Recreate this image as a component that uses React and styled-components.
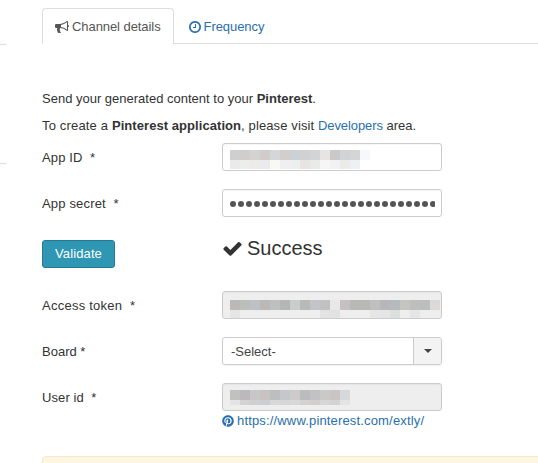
import React from "react";
import styled, { createGlobalStyle } from "styled-components";
import { FaPinterest } from "react-icons/fa";

const GlobalStyle = createGlobalStyle`
  * { box-sizing: border-box; }
  body {
    margin: 0;
    background: #fff;
    color: #333;
    font: 13px/18px "Liberation Sans", Arial, sans-serif;
    overflow: hidden;
  }
`;
const Page = styled.div`
  display: flex;
  height: 463px;
  overflow: hidden;
`;
const Sidebar = styled.div`
  width: 6px;
  height: 164px;
  margin-right: 36px;
  padding-top: 44px;
  border-bottom: 1px solid #ddd;
  &::before { content: ""; display: block; border-top: 1px solid #ddd; }
`;
const Main = styled.main`
  flex: 1;
`;
const Tabs = styled.nav`
  display: flex;
  height: 44px;
  padding-top: 8px;
  border-bottom: 1px solid #ddd;
`;
const Tab = styled.a`
  display: flex;
  align-items: center;
  height: 36px;
  padding: 1px 12px 0;
  border: 1px solid ${(p) => (p.$active ? "#ddd" : "transparent")};
  border-bottom: 0;
  border-radius: 4px 4px 0 0;
  margin-right: 2px;
  background: ${(p) => (p.$active ? "#fff" : "transparent")};
  color: ${(p) => (p.$active ? "#555" : "#2a6fad")};
  letter-spacing: -0.07px;
`;
const Icon = styled.svg`
  flex: none;
  width: ${(p) => p.$w}px;
  height: ${(p) => p.$w}px;
  margin-right: ${(p) => p.$gap || 3}px;
  fill: currentColor;
`;
const Content = styled.section`
  padding-top: 46px;
`;
const Paragraph = styled.p`
  margin: 0 0 9px;
  & + & { margin-bottom: 8px; }
`;
const Run = styled.span`
  letter-spacing: ${(p) => p.$spacing}px;
`;
const Link = styled.a`
  color: #2a6fad;
`;
const Row = styled.div`
  display: flex;
  height: 28px;
  margin-bottom: 18px;
`;
const Label = styled.label`
  width: 180px;
  padding-top: 6px;
  white-space: pre;
  letter-spacing: ${(p) => p.$spacing || 0}px;
`;
const Field = styled.div`
  width: 220px;
  height: 28px;
  padding: 6px 0 0 7px;
  border: 1px solid #ccc;
  border-radius: 3px;
  background: ${(p) => (p.$disabled ? "#eee" : "#fff")};
  box-shadow: inset 0 1px 1px rgba(0, 0, 0, 0.04);
  overflow: hidden;
`;
const TokenField = styled(Field)`
  padding-top: 8px;
`;
const Mosaic = styled.div`
  display: grid;
  grid-template-columns: repeat(${(p) => p.$cols}, 10px);
  grid-template-rows: ${(p) => p.$rows};
`;
const Tile = styled.i`
  background: ${(p) => p.$color};
`;
const Secret = styled.svg`
  display: block;
  width: 205px;
  height: 16px;
  fill: #555;
`;
const Button = styled.button`
  width: 73px;
  height: 28px;
  margin-right: 107px;
  padding: 0;
  border: 1px solid #247a90;
  border-radius: 3px;
  background: #2f96b4;
  color: #fff;
  font: inherit;
  letter-spacing: 0.12px;
`;
const StatusRow = styled(Row)`
  margin: 23px 0;
`;
const Status = styled.h3`
  display: flex;
  align-items: center;
  height: 16px;
  margin: 0;
  font-size: 20px;
  font-weight: 400;
`;
const Select = styled.div`
  display: flex;
  width: 220px;
  height: 28px;
  border: 1px solid #ccc;
  border-radius: 3px;
  box-shadow: 0 1px 2px rgba(0, 0, 0, 0.06);
  overflow: hidden;
`;
const SelectValue = styled.span`
  flex: 1;
  padding: 5px 8px;
  color: #444;
`;
const SelectArrow = styled.span`
  display: flex;
  align-items: center;
  justify-content: center;
  width: 28px;
  border-left: 1px solid #ccc;
  background: #f3f3f3;
`;
const Caret = styled.i`
  border: 4px solid transparent;
  border-top-color: #444;
  border-bottom: 0;
`;
const ProfileLink = styled(Link)`
  display: flex;
  align-items: center;
  height: 20px;
  margin: -18px 0 25px 180px;
  letter-spacing: 0.16px;
`;
const PinIcon = styled(FaPinterest)`
  width: 12px;
  height: 12px;
  margin-right: 3px;
`;
const Notice = styled.div`
  height: 40px;
  margin-right: -5px;
  border: 1px solid #fbe8c8;
  border-radius: 4px;
  background: #fdf7e2;
`;

const appId = "#cfcfcf #cecece #d5d3d2 #d0cccb #d4d6d8 #d2cecb #ccd1d5 #d1d1d1 #d3d4d6 #e7e5e3 #c9c9c9 #d2d3d4 #d5d5d6 #f7f8fb #eaeaea #eceeed #ecebea #ebebeb #f8f8f5 #efeff1 #ecefee #e7e5e4 #e9ebea #f6f6f6 #f2f2f2 #ebebe9 #eff0f2 #ffffff".split(" ");
const token = "#bbb9b7 #bcbebc #bec1c3 #bbb9b7 #bfbfbf #b4b7b6 #cacdcc #b9b9b7 #c3c4c8 #c1c1c1 #e8e8e6 #c5c0c1 #b8b8b7 #b8b8b7 #bfbfbf #b7b7bb #b5babc #c4c4c1 #bebebe #bbbebc #dbdad8 #e5e5e5 #eeeeee #eeeeee #eeeeee #eeeeee #eeeeee #eeeeee #eeeeee #eeeeee #e3e3e3 #e1e3e2 #eeeeee #eeeeee #eeeeee #e6e6e6 #e5e5e3 #dcdfdd #eeeeee #e5e5e3 #eeeeee #eeeeee".split(" ");
const user = "#c1c1bf #bababe #c9c7c6 #c7c3c2 #bdbebf #c5c7cc #cccbc9 #bcbcbc #c2c2c4 #c9c9c9 #c9c5c5 #d6d8dc #e4e4e4 #d3d3d3 #d0d0d0 #cccfd2 #d8d8d8 #d6d6d6 #d8d8d8 #d2d2d3 #d0cfce #d6d6d6 #d3d3d4 #e4e4e4".split(" ");

function Redacted({ colors, rows }) {
  return (
    <Mosaic $cols={colors.length / 2} $rows={rows}>
      {colors.map((c, i) => <Tile key={i} $color={c} />)}
    </Mosaic>
  );
}

export default function App() {
  return (
    <Page>
      <GlobalStyle />
      <Sidebar />
      <Main>
        <Tabs>
          <Tab $active>
            <Icon $w={14} viewBox="0 0 1792 1792">
              <path d="M1664 640q53 0 90.5 37.5t37.5 90.5-37.5 90.5-90.5 37.5v384q0 52-38 90t-90 38q-417-347-812-380-58 19-91 66t-31 100.5 40 92.5q-20 33-23 65.5t6 58 33.5 55 48 50 61.5 50.5q-29 58-111.5 83t-168.5 11.5-132-55.5q-7-23-29.5-87.5t-32-94.5-23-89-15-101 3.5-98 22-110.5h-122q-66 0-113-47t-47-113v-192q0-66 47-113t113-47h480q435 0 896-384 52 0 90 38t38 90v384zm-128 604v-954q-394 302-768 343v270q377 42 768 341z" />
            </Icon>
            Channel details
          </Tab>
          <Tab>
            <Icon $w={12} viewBox="0 128 1536 1536">
              <path d="M896 544v448q0 14-9 23t-23 9h-320q-14 0-23-9t-9-23v-64q0-14 9-23t23-9h224v-352q0-14 9-23t23-9h64q14 0 23 9t9 23zm416 352q0-148-73-273t-198-198-273-73-273 73-198 198-73 273 73 273 198 198 273 73 273-73 198-198 73-273zm224 0q0 209-103 385.5t-279.5 279.5-385.5 103-385.5-103-279.5-279.5-103-385.5 103-385.5 279.5-279.5 385.5-103 385.5 103 279.5 279.5 103 385.5z" />
            </Icon>
            Frequency
          </Tab>
        </Tabs>
        <Content>
          <Paragraph>Send your generated content to your <b>Pinterest</b>.</Paragraph>
          <Paragraph>
            <Run $spacing={0.17}>To create a </Run>
            <Run as="b" $spacing={0.06}>Pinterest application</Run>
            <Run $spacing={0.12}>, please visit </Run>
            <Link><Run $spacing={-0.1}>Developers</Run></Link> area.
          </Paragraph>
          <Row>
            <Label $spacing={0.13}>{"App ID  *"}</Label>
            <Field><Redacted colors={appId} rows="10px 9px" /></Field>
          </Row>
          <Row>
            <Label $spacing={0.17}>{"App secret  *"}</Label>
            <Field>
              <Secret viewBox="0 0 205 16">
                {Array.from({ length: 26 }, (_, i) => <circle key={i} cx={3 + i * 8} cy="8" r="3" />)}
              </Secret>
            </Field>
          </Row>
          <StatusRow>
            <Button>Validate</Button>
            <Status>
              <Icon $w={21} $gap={4} viewBox="0 0 1792 1792">
                <path d="M1671 566q0 40-28 68l-724 724-136 136q-28 28-68 28t-68-28l-136-136-362-362q-28-28-28-68t28-68l136-136q28-28 68-28t68 28l294 295 656-657q28-28 68-28t68 28l136 136q28 28 28 68z" />
              </Icon>
              Success
            </Status>
          </StatusRow>
          <Row>
            <Label $spacing={0.25}>{"Access token  *"}</Label>
            <TokenField $disabled><Redacted colors={token} rows="10px 8px" /></TokenField>
          </Row>
          <Row>
            <Label>Board *</Label>
            <Select>
              <SelectValue>-Select-</SelectValue>
              <SelectArrow><Caret /></SelectArrow>
            </Select>
          </Row>
          <Row>
            <Label $spacing={0.1}>{"User id  *"}</Label>
            <Field $disabled><Redacted colors={user} rows="10px 5px" /></Field>
          </Row>
          <ProfileLink><PinIcon />https://www.pinterest.com/extly/</ProfileLink>
          <Notice />
        </Content>
      </Main>
    </Page>
  );
}
